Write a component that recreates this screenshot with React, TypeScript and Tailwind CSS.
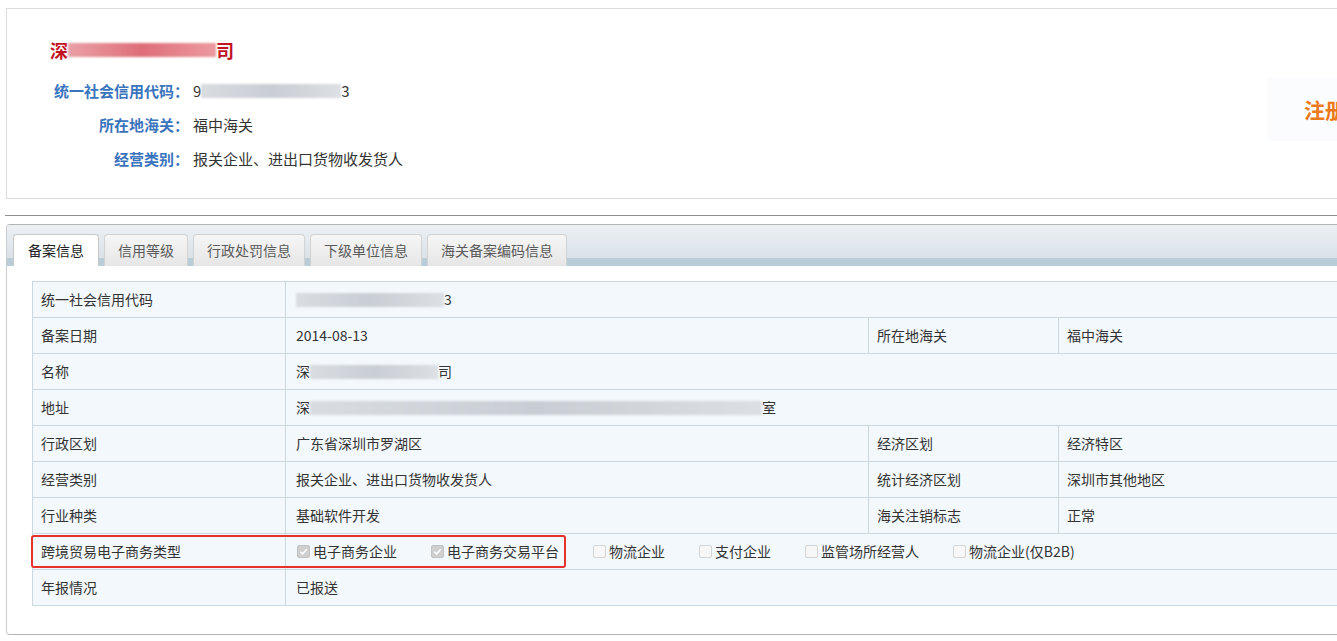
import React from "react";

const font = { fontFamily: '"Noto Sans CJK SC", "Noto Sans", sans-serif' };

// ─── Blurred (masked) text stand-in ──────────────────────────────────────────

function Mask({ w, tone = "gray" }: { w: number; tone?: "gray" | "red" }) {
  const cls =
    tone === "red"
      ? "bg-gradient-to-r from-[#e9a0a6] via-[#de6e78] to-[#ec9aa0]"
      : "bg-gradient-to-r from-[#d9dde2] via-[#c9ced4] to-[#dcdfe3]";
  return (
    <span
      className={`inline-block align-middle h-[14px] blur-[1px] ${cls}`}
      style={{ width: w }}
    />
  );
}

function Check({ on }: { on?: boolean }) {
  return on ? (
    <span className="w-[13px] h-[13px] rounded-[2px] bg-[#cfcfcf] border border-[#c2c2c2] flex items-center justify-center shrink-0">
      <svg viewBox="0 0 10 10" className="w-[9px] h-[9px]">
        <path d="M1.5 5.2 L4 7.6 L8.6 2.4" fill="none" stroke="#ffffff" strokeWidth="1.6" />
      </svg>
    </span>
  ) : (
    <span className="w-[13px] h-[13px] rounded-[2px] bg-[#f7f7f7] border border-[#d4d4d4] shrink-0" />
  );
}

// ─── Header card ─────────────────────────────────────────────────────────────

function HeaderCard() {
  const rows: [string, React.ReactNode][] = [
    [
      "统一社会信用代码：",
      <span className="flex items-center">
        9<Mask w={140} />3
      </span>,
    ],
    ["所在地海关：", "福中海关"],
    ["经营类别：", "报关企业、进出口货物收发货人"],
  ];
  return (
    <div className="ml-[6px] mt-[8px] w-[1420px] h-[191px] border border-[#dcdcdc] bg-white flex justify-between">
      <div className="pl-[43px] pt-[28px]">
        <div className="flex items-center h-[26px] text-[18px] font-bold text-[#c1121f]">
          <span>深</span>
          <Mask w={148} tone="red" />
          <span>司</span>
        </div>
        <div className="mt-[11px]">
          {rows.map(([k, v]) => (
            <div key={k} className="flex items-center h-[34px] text-[15px]">
              <span className="w-[139px] text-right font-bold text-[#3a74bd]">{k}</span>
              <span className="ml-[4px] text-[#333]">{v}</span>
            </div>
          ))}
        </div>
      </div>
      <div className="mt-[69px] w-[158px] h-[63px] bg-[#fafcfd] pl-[37px] flex items-center">
        <span className="text-[21px] font-bold text-[#ec7a1c]">注册</span>
      </div>
    </div>
  );
}

// ─── Tabs ─────────────────────────────────────────────────────────────────────

function Tabs() {
  const tabs = ["备案信息", "信用等级", "行政处罚信息", "下级单位信息", "海关备案编码信息"];
  return (
    <div className="relative h-[41px] rounded-tl-[4px] bg-gradient-to-b from-[#ecf0f3] to-[#d5dfe6]">
      <div className="absolute left-0 right-0 bottom-0 h-[8px] bg-[#b8cdd8]" />
      <div className="relative flex items-end h-full pl-[6px]">
        {tabs.map((t, i) => (
          <div
            key={t}
            className={
              i === 0
                ? "h-[32px] px-[14px] flex items-center rounded-t-[4px] border border-b-0 border-[#c8c8c8] bg-white text-[14px] text-[#222]"
                : "ml-[5px] h-[32px] px-[13px] flex items-center rounded-t-[4px] border border-b-0 border-[#d2d2d2] bg-gradient-to-b from-[#f6f6f6] to-[#e6e6e6] text-[14px] text-[#5a5a5a]"
            }
          >
            {t}
          </div>
        ))}
      </div>
    </div>
  );
}

// ─── Info table ───────────────────────────────────────────────────────────────

const cell = "h-[36px] px-[8px] flex items-center border-r border-b border-[#cbd8e2] text-[14px] text-[#333]";

function Row({ k, v, k2, v2 }: { k: string; v: React.ReactNode; k2?: string; v2?: string }) {
  return (
    <div className="flex">
      <div className={`${cell} w-[253px]`}>{k}</div>
      {k2 ? (
        <>
          <div className={`${cell} w-[583px] pl-[10px]`}>{v}</div>
          <div className={`${cell} w-[190px]`}>{k2}</div>
          <div className={`${cell} flex-1`}>{v2}</div>
        </>
      ) : (
        <div className={`${cell} flex-1 pl-[10px]`}>{v}</div>
      )}
    </div>
  );
}

function InfoTable() {
  const types: [string, boolean][] = [
    ["电子商务企业", true],
    ["电子商务交易平台", true],
    ["物流企业", false],
    ["支付企业", false],
    ["监管场所经营人", false],
    ["物流企业(仅B2B)", false],
  ];
  return (
    <div className="relative ml-[25px] w-[1340px] border-t border-l border-[#cbd8e2] bg-[#f3f8fc]">
      <Row k="统一社会信用代码" v={<span className="flex items-center"><Mask w={148} />3</span>} />
      <Row k="备案日期" v="2014-08-13" k2="所在地海关" v2="福中海关" />
      <Row k="名称" v={<span className="flex items-center"><span>深</span><Mask w={128} />司</span>} />
      <Row k="地址" v={<span className="flex items-center"><span>深</span><Mask w={452} />室</span>} />
      <Row k="行政区划" v="广东省深圳市罗湖区" k2="经济区划" v2="经济特区" />
      <Row k="经营类别" v="报关企业、进出口货物收发货人" k2="统计经济区划" v2="深圳市其他地区" />
      <Row k="行业种类" v="基础软件开发" k2="海关注销标志" v2="正常" />
      <Row
        k="跨境贸易电子商务类型"
        v={
          <div className="flex items-center gap-[34px] pl-[1px]">
            {types.map(([t, on]) => (
              <label key={t} className="flex items-center gap-[3px]">
                <Check on={on} />
                <span>{t}</span>
              </label>
            ))}
          </div>
        }
      />
      <Row k="年报情况" v="已报送" />
      {/* highlight annotation */}
      <div className="absolute left-[-2px] top-[253px] w-[535px] h-[33px] rounded-[3px] border-2 border-[#e5322d] pointer-events-none" />
    </div>
  );
}

// ─── Page ─────────────────────────────────────────────────────────────────────

export default function App() {
  return (
    <div className="w-[1337px] h-[641px] overflow-hidden bg-white" style={font}>
      <HeaderCard />
      <div className="ml-[5px] mt-[16px] w-[1420px] h-px bg-[#8e8e8e]" />
      <div className="ml-[6px] mt-[8px] w-[1420px] h-[411px] rounded-[4px] border border-[#b4b4b4] border-l-[#cccccc] bg-white">
        <Tabs />
        <div className="pt-[15px]">
          <InfoTable />
        </div>
      </div>
    </div>
  );
}
